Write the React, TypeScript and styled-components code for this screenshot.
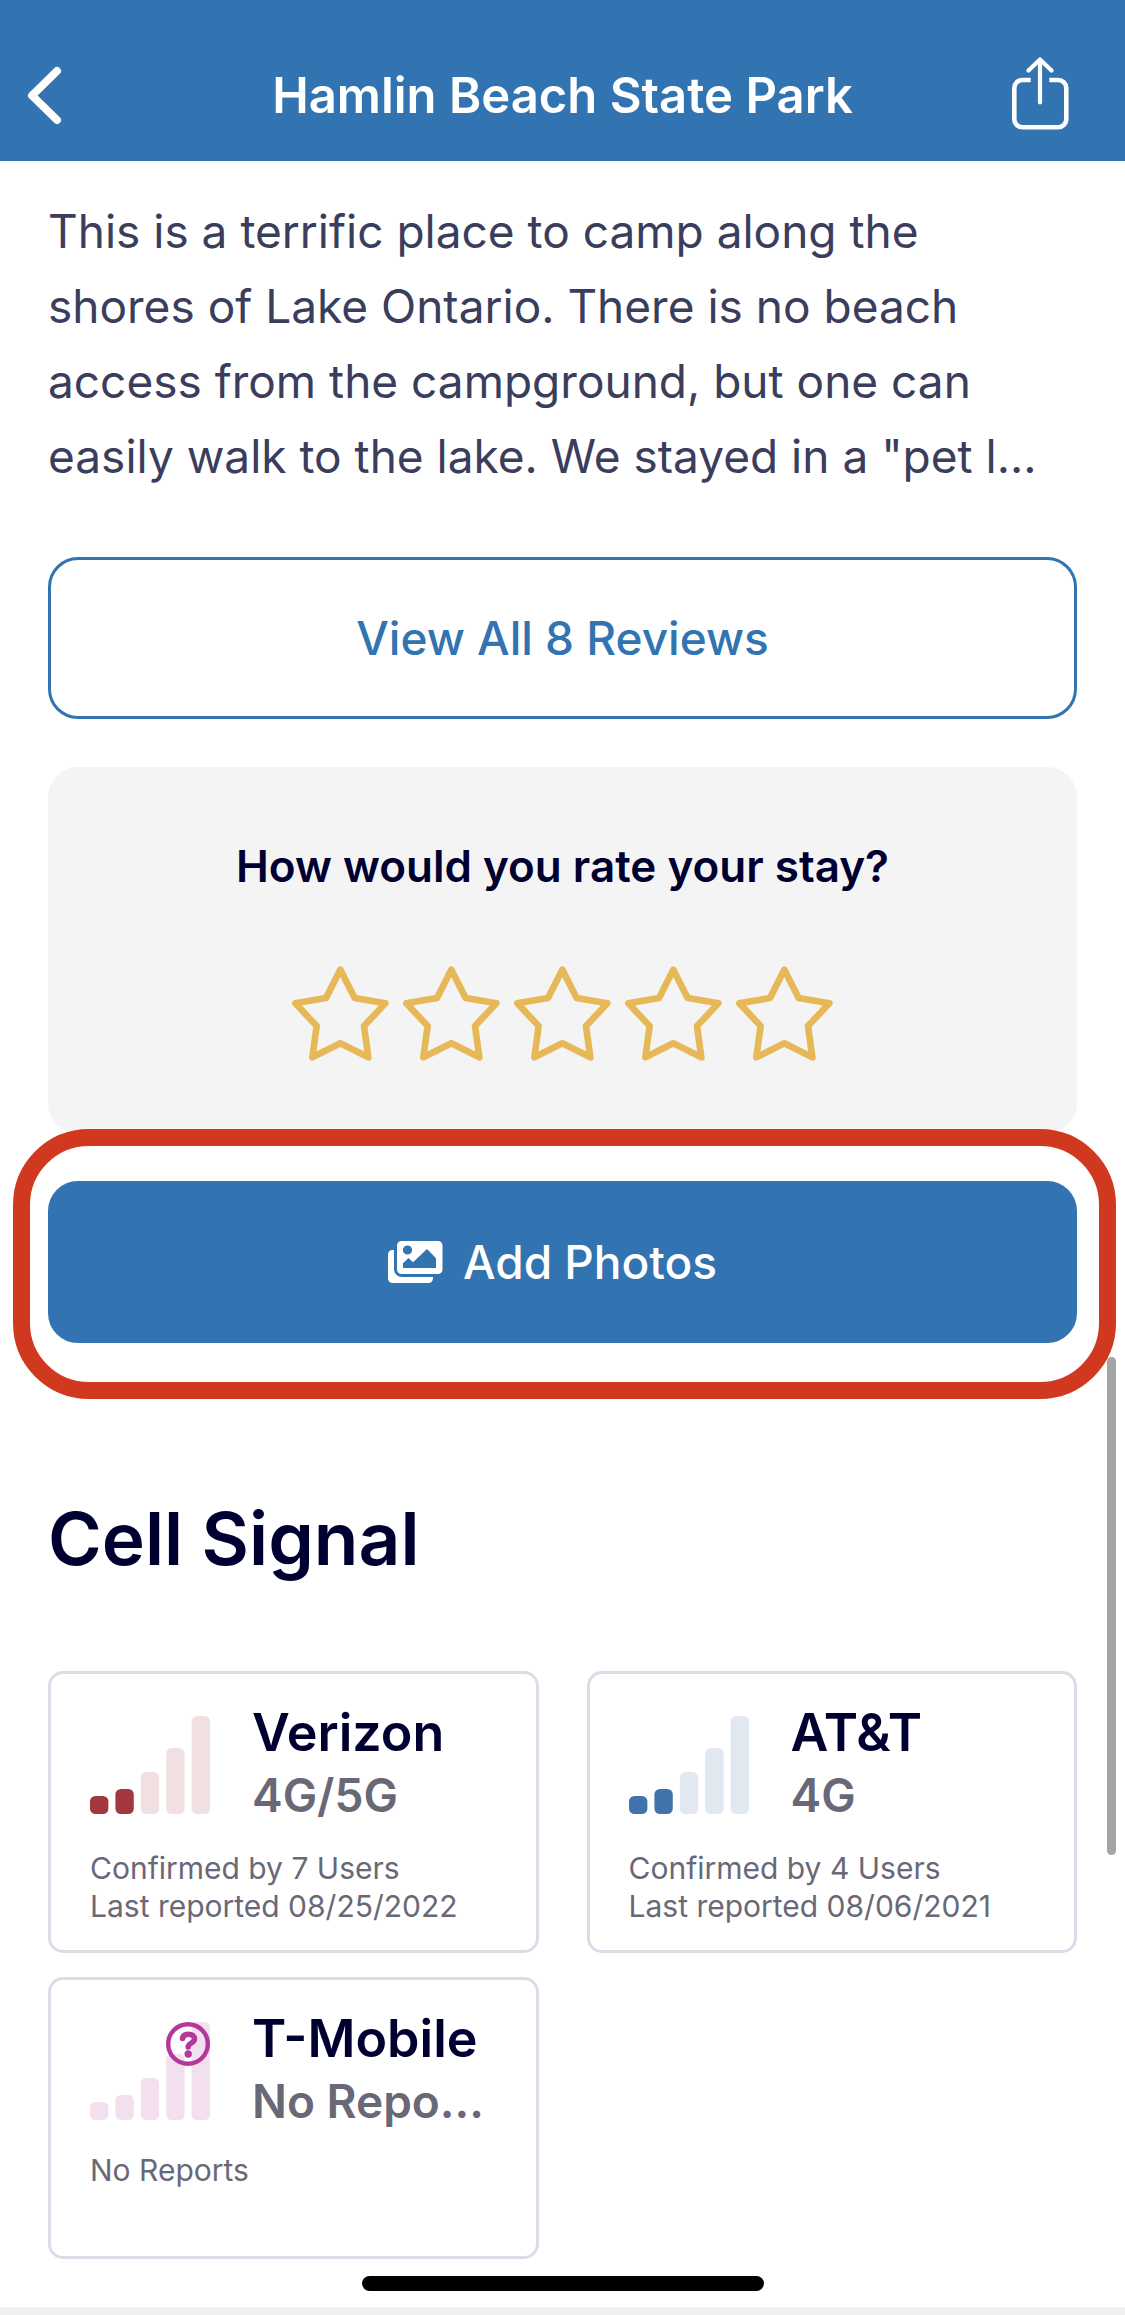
import React from "react";
import styled, { createGlobalStyle } from "styled-components";

const GlobalStyle = createGlobalStyle`
  *, *::before, *::after { box-sizing: border-box; }
  html, body { margin: 0; padding: 0; background: #ffffff; }
  body { font-family: Inter, "Liberation Sans", sans-serif; color: #000030; }
  h1, h2, h3, p { margin: 0; }
  button { font-family: inherit; cursor: pointer; }
`;

const Screen = styled.div`
  position: relative;
  display: flex;
  flex-direction: column;
  min-height: 100vh;
`;

const Header = styled.header`
  display: flex;
  align-items: center;
  justify-content: space-between;
  padding: 52px 24px 22px;
  background: #3174b1;
  color: #ffffff;
`;

const HeaderButton = styled.button<{ $end?: boolean }>`
  display: flex;
  align-items: center;
  justify-content: ${(p) => (p.$end ? "flex-end" : "flex-start")};
  width: 120px;
  height: 87px;
  padding: 0 ${(p) => (p.$end ? 32 : 0)}px 0 0;
  border: 0;
  background: none;
  color: inherit;
`;

const Title = styled.h1`
  font-size: 49px;
  line-height: 60px;
  font-weight: 600;
`;

const Main = styled.main`
  display: flex;
  flex-direction: column;
  gap: 48px;
  padding: 33px 48px 56px;
`;

const Review = styled.p`
  margin-bottom: 15px;
  font-size: 46px;
  line-height: 75px;
  color: #3a3d5c;
`;

const ActionButton = styled.button<{ $filled?: boolean }>`
  display: flex;
  align-items: center;
  justify-content: center;
  gap: 20px;
  width: 100%;
  height: 162px;
  padding: 0 20px 0 ${(p) => (p.$filled ? 0 : 20)}px;
  border: 3px solid #3174b1;
  border-radius: 30px;
  background: ${(p) => (p.$filled ? "#3174b1" : "#ffffff")};
  color: ${(p) => (p.$filled ? "#ffffff" : "#3174b1")};
  font-size: 46px;
  line-height: 60px;
  font-weight: 500;
`;

const RatingBox = styled.fieldset`
  display: flex;
  flex-direction: column;
  align-items: center;
  gap: 70px;
  min-width: 0;
  margin: 0;
  padding: 69px 24px 72px;
  border: 0;
  border-radius: 30px;
  background: #f4f4f4;
`;

const RatingTitle = styled.h2`
  font-size: 44px;
  line-height: 60px;
  font-weight: 600;
`;

const Stars = styled.div`
  display: flex;
  gap: 14px;
`;

const StarLabel = styled.label`
  display: flex;
  cursor: pointer;
`;

const HiddenRadio = styled.input`
  position: absolute;
  width: 1px;
  height: 1px;
  margin: 0;
  opacity: 0;
`;

const Highlighted = styled.div`
  position: relative;
`;

const Ring = styled.div`
  position: absolute;
  z-index: 2;
  inset: -52px -39px -56px -35px;
  border: 17px solid #d13820;
  border-radius: 76px;
  pointer-events: none;
`;

const Section = styled.section`
  display: flex;
  flex-direction: column;
  gap: 84px;
  padding-top: 100px;
`;

const SectionTitle = styled.h2`
  font-size: 73px;
  line-height: 96px;
  font-weight: 600;
`;

const CardGrid = styled.div`
  display: grid;
  grid-template-columns: repeat(2, minmax(0, 1fr));
  gap: 24px 48px;
`;

const Card = styled.article<{ $reported: boolean }>`
  display: flex;
  flex-direction: column;
  gap: ${(p) => (p.$reported ? 24 : 20)}px;
  min-height: 282px;
  padding: 27px 39px 20px;
  border: 3px solid #d9dde8;
  border-radius: 15px;
  background: #ffffff;
`;

const CardTop = styled.div`
  display: flex;
  align-items: flex-end;
  gap: 42px;
`;

const CardText = styled.div`
  flex: 1;
  min-width: 0;
`;

const Carrier = styled.h3`
  font-size: 52px;
  line-height: 64px;
  font-weight: 600;
`;

const Network = styled.p`
  white-space: nowrap;
  font-size: 46px;
  line-height: 60px;
  font-weight: 600;
  color: #696877;
`;

const Details = styled.p`
  font-size: 30px;
  line-height: 38px;
  color: #696877;
`;

const SignalSvg = styled.svg`
  flex: none;
  margin-bottom: 11px;
`;

const ScrollThumb = styled.div`
  position: absolute;
  top: 1357px;
  right: 9px;
  width: 9px;
  height: 498px;
  border-radius: 5px;
  background: #a5a5a5;
`;

const BottomBar = styled.footer`
  position: fixed;
  right: 0;
  bottom: 0;
  left: 0;
  display: flex;
  justify-content: center;
  padding-bottom: 16px;
  border-bottom: 8px solid #f0f0f0;
`;

const HomeIndicator = styled.div`
  width: 402px;
  height: 15px;
  border-radius: 8px;
  background: #000000;
`;

const BackIcon = () => (
  <svg width="40" height="60" viewBox="0 0 40 60" fill="none" aria-hidden="true">
    <path d="M33 5 8 29.500 33 54" stroke="currentColor" strokeWidth="8" strokeLinecap="round" strokeLinejoin="round" />
  </svg>
);

const ShareIcon = () => (
  <svg width="57" height="77" viewBox="0 0 57 77" fill="none" stroke="currentColor" aria-hidden="true">
    <path d="M18.700 23H10.300a8 8 0 0 0-8 8v31.300a8 8 0 0 0 8 8h36a8 8 0 0 0 8-8V31a8 8 0 0 0-8-8H37.300" strokeWidth="4.600" />
    <path d="M28 45.500V3M16.500 13.500 28 2.500l11.500 11" strokeWidth="4.200" strokeLinecap="round" strokeLinejoin="round" />
  </svg>
);

const StarIcon = () => (
  <svg width="97" height="95" viewBox="38 46 291 285" fill="none" aria-hidden="true">
    <path
      d="M183 57 226 142 318 158 254 226 267 320 183 278 99 320 112 226 48 158 140 142Z"
      stroke="#e7b858"
      strokeWidth="20"
      strokeLinejoin="round"
    />
  </svg>
);

const PhotosIcon = () => (
  <svg width="55" height="42" viewBox="0 0 55 42" fill="currentColor" aria-hidden="true">
    <path d="M6 9H4.500A4.500 4.500 0 0 0 0 13.500V37.500A4.500 4.500 0 0 0 4.500 42H40.500A4.500 4.500 0 0 0 45 37.500V36H14A8 8 0 0 1 6 28Z" />
    <path
      fillRule="evenodd"
      d="M13.500 0H50A4.500 4.500 0 0 1 54.500 4.500V28.500A4.500 4.500 0 0 1 50 33H13.500A4.500 4.500 0 0 1 9 28.500V4.500A4.500 4.500 0 0 1 13.500 0ZM19.500 4.400A4.600 4.600 0 1 0 19.500 13.600A4.600 4.600 0 1 0 19.500 4.400ZM15 27H48V17.300L39 8 25 21.200 20.500 17 15 22.300Z"
    />
  </svg>
);

const BARS = [18, 25, 42, 66, 98];

type SignalProps = { level: number; color: string; faded: string; unknown?: boolean };

const SignalIcon = ({ level, color, faded, unknown }: SignalProps) => (
  <SignalSvg width="120" height="98" viewBox="0 0 120 98" aria-hidden="true">
    {BARS.map((h, i) => (
      <rect key={h} x={i * 25.4} y={98 - h} width="18.400" height={h} rx="5.500" fill={i < level ? color : faded} />
    ))}
    {unknown && (
      <g fill="none" stroke={color} strokeLinecap="round" strokeLinejoin="round">
        <circle cx="98" cy="22" r="19.800" strokeWidth="4.400" />
        <path d="M92.500 16.500C93 13.500 95.500 12.200 98.500 12.200C102 12.200 104.500 14 104.500 17C104.500 21 98.200 21 98.200 25" strokeWidth="5.600" />
        <circle cx="98.200" cy="32" r="3.700" fill={color} stroke="none" />
      </g>
    )}
  </SignalSvg>
);

const CARRIERS = [
  { name: "Verizon", network: "4G/5G", lines: ["Confirmed by 7 Users", "Last reported 08/25/2022"], level: 2, color: "#a33740", faded: "#f0e0e1" },
  { name: "AT&T", network: "4G", lines: ["Confirmed by 4 Users", "Last reported 08/06/2021"], level: 2, color: "#4373ad", faded: "#e1e8f1" },
  { name: "T-Mobile", network: "No Repo...", lines: ["No Reports"], level: 0, color: "#b5379a", faded: "#f2e0ee", unknown: true },
];

export default function App() {
  return (
    <Screen>
      <GlobalStyle />
      <Header>
        <HeaderButton aria-label="Back">
          <BackIcon />
        </HeaderButton>
        <Title>Hamlin Beach State Park</Title>
        <HeaderButton $end aria-label="Share">
          <ShareIcon />
        </HeaderButton>
      </Header>
      <Main>
        <Review>
          This is a terrific place to camp along the shores of Lake Ontario. There is no beach access from the
          campground, but one can easily walk to the lake. We stayed in a "pet l...
        </Review>
        <ActionButton>View All 8 Reviews</ActionButton>
        <RatingBox aria-labelledby="rating-title">
          <RatingTitle id="rating-title">How would you rate your stay?</RatingTitle>
          <Stars>
            {[1, 2, 3, 4, 5].map((n) => (
              <StarLabel key={n}>
                <HiddenRadio type="radio" name="rating" value={n} aria-label={`${n} stars`} />
                <StarIcon />
              </StarLabel>
            ))}
          </Stars>
        </RatingBox>
        <Highlighted>
          <ActionButton $filled>
            <PhotosIcon />
            Add Photos
          </ActionButton>
          <Ring />
        </Highlighted>
        <Section>
          <SectionTitle>Cell Signal</SectionTitle>
          <CardGrid>
            {CARRIERS.map((c) => (
              <Card key={c.name} $reported={!c.unknown}>
                <CardTop>
                  <SignalIcon level={c.level} color={c.color} faded={c.faded} unknown={c.unknown} />
                  <CardText>
                    <Carrier>{c.name}</Carrier>
                    <Network>{c.network}</Network>
                  </CardText>
                </CardTop>
                <Details>
                  {c.lines.map((line, i) => (
                    <React.Fragment key={line}>
                      {i > 0 && <br />}
                      {line}
                    </React.Fragment>
                  ))}
                </Details>
              </Card>
            ))}
          </CardGrid>
        </Section>
      </Main>
      <ScrollThumb />
      <BottomBar>
        <HomeIndicator />
      </BottomBar>
    </Screen>
  );
}
